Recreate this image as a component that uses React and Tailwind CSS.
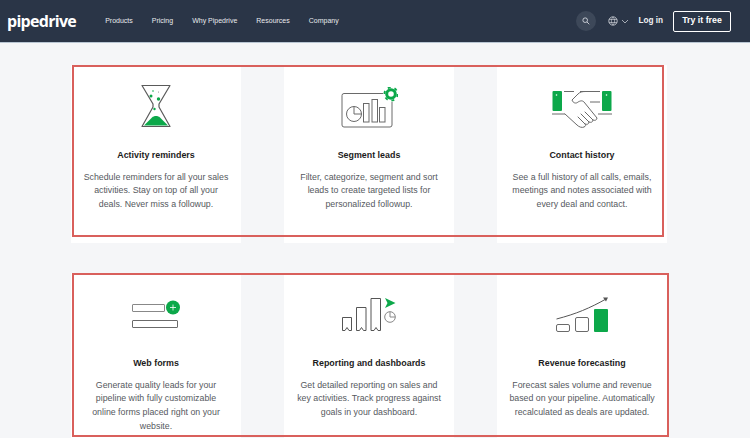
const Hourglass = () => (
  <svg width="32" height="44" viewBox="0 0 32 44" fill="none">
    <path d="M2 1.500h28L19 20v3l11 19.500H2L13 23v-3L2 1.500z" stroke="#5a5a5a" strokeWidth="1.200" strokeLinejoin="round" />
    <path d="M4 41.500l8-8c2-2 6-2 8 0l8 8z" fill="#0ca84a" />
    <circle cx="11" cy="12" r="1.500" fill="#0ca84a" />
    <circle cx="18.500" cy="15" r="1.700" fill="#0ca84a" />
    <circle cx="14.500" cy="25" r="1.200" fill="#0ca84a" />
    <circle cx="13" cy="7" r="0.800" fill="#0ca84a" />
    <circle cx="18.500" cy="8" r="0.500" fill="#777" />
  </svg>
);

const Segment = () => (
  <svg width="57" height="41" viewBox="0 0 57 41" fill="none">
    <path d="M42 6.500H3a2 2 0 0 0-2 2V38a2 2 0 0 0 2 2h46a2 2 0 0 0 2-2V15" stroke="#6a6a6a" />
    <circle cx="13" cy="27" r="7.500" stroke="#6a6a6a" />
    <path d="M13 19.500V27h7.500" stroke="#6a6a6a" />
    <rect x="22.500" y="16.500" width="5.500" height="18.500" stroke="#6a6a6a" />
    <rect x="31" y="12.500" width="5.500" height="22.500" stroke="#6a6a6a" />
    <rect x="38.500" y="20.500" width="5.500" height="14.500" stroke="#6a6a6a" />
    <circle cx="50" cy="7" r="4.300" stroke="#0ca84a" strokeWidth="3" />
    <circle cx="50" cy="7" r="6.600" stroke="#0ca84a" strokeWidth="1.800" strokeDasharray="3 3.900" />
  </svg>
);

const Handshake = () => (
  <svg width="60" height="38" viewBox="0 0 60 38" fill="none">
    <rect x="0.500" y="1" width="9.500" height="20" rx="1" fill="#0ca84a" />
    <rect x="50" y="1" width="9.500" height="20" rx="1" fill="#0ca84a" />
    <circle cx="4.500" cy="5" r="0.800" fill="#fff" />
    <circle cx="54.500" cy="5" r="0.800" fill="#fff" />
    <path d="M12 1.500h10M28 1.500h20M0 24h13M46 24h14M38 12h10" stroke="#6a6a6a" />
    <path
      d="M13 24l12 11c2 2 5 3 7 2 2-1 2-2 1-3l-7-7M33 34c2 1 4 0 4-2l-8-8M37 32c2 1 4 0 4-2l-8-8M41 30c2 1 4 0 4-2L32 12c-2-2-4-1-6 0-2 2-5 1-6-2l6-6c2-2 4-2.500 7-2.500"
      stroke="#6a6a6a"
      strokeLinejoin="round"
      strokeLinecap="round"
    />
  </svg>
);

const Forms = () => (
  <svg className="mb-[8px]" width="49" height="28" viewBox="0 0 49 28" fill="none">
    <rect x="0.500" y="4.500" width="32" height="7" rx="0.500" stroke="#888" />
    <rect x="0.500" y="20.500" width="45" height="7" rx="0.500" stroke="#6a6a6a" />
    <circle cx="41" cy="7.500" r="7" fill="#0ca84a" />
    <path d="M41 4.500v6M38 7.500h6" stroke="#fff" strokeWidth="0.800" />
  </svg>
);

const Reporting = () => (
  <svg className="mb-[5px]" width="54" height="34" viewBox="0 0 54 34" fill="none">
    <path d="M0.500 33.500V20.500h9v13M7 33.500l-2-3-2 3M0.500 33.500H3M7 33.500h2.500" stroke="#555" />
    <path d="M14.500 33.500V10.500h9.500v23M21.500 33.500l-2-3-2 3M14.500 33.500h3M21.500 33.500H24" stroke="#555" />
    <path d="M29 33.500V1.500h9.500v32M36 33.500l-2-3-2 3M29 33.500h3M36 33.500h2.500" stroke="#555" />
    <path d="M43 1l10.500 5L43 11l2.500-5z" fill="#0ca84a" />
    <circle cx="48" cy="20" r="5.300" stroke="#888" />
    <path d="M48 14.700V20h5.300" stroke="#888" />
  </svg>
);

const Revenue = () => (
  <svg className="mb-[4px]" width="52" height="35" viewBox="0 0 52 35" fill="none">
    <path d="M0.500 22C20 17 34 11 50 2" stroke="#555" />
    <path d="M47 0.500l5 0-2 4z" fill="#555" />
    <rect x="0.500" y="27.500" width="13" height="7" rx="1.500" stroke="#6a6a6a" />
    <rect x="19.500" y="20.500" width="13" height="14" rx="1.500" stroke="#6a6a6a" />
    <rect x="38" y="12" width="14" height="23" rx="1" fill="#0ca84a" />
  </svg>
);

const Card = ({ icon, title, lines }) => (
  <div className="w-[170px] bg-white flex flex-col items-center">
    <div className="h-[63px] flex items-end justify-center">{icon}</div>
    <h3 className="mt-[20px] text-[8.9px] leading-[14px] font-bold text-[#1c1c1c]">{title}</h3>
    <p className="mt-[8.5px] text-[8.8px] leading-[13.7px] text-[#55595e] text-center whitespace-nowrap">
      {lines.map((l) => (
        <span key={l} className="block">{l}</span>
      ))}
    </p>
  </div>
);

// red frames sit on top of the cards, they are annotations on the screenshot
const Row = ({ children, className, frame }) => (
  <section className={`relative pl-[71px] flex gap-[43px] ${className}`}>
    {children}
    <div className={`absolute left-[72px] top-0 border-2 border-[#d9605c] ${frame}`}></div>
  </section>
);

export default function App() {
  return (
    <div className="w-[750px] h-[438px] overflow-hidden bg-[#f5f6f8] font-['Liberation_Sans',Arial,sans-serif]">
      <header className="h-[43px] bg-[#2a3547] border-b border-[#b9c6d3] flex items-center pl-[7px] pr-[19px]">
        <span className="text-[16px] font-bold tracking-[-0.7px] text-white font-['Open_Sans',sans-serif]">pipedrive</span>
        <nav className="ml-[29px] flex gap-[19px] text-[7px] text-[#e8eaed]">
          <a>Products</a>
          <a>Pricing</a>
          <a>Why Pipedrive</a>
          <a>Resources</a>
          <a>Company</a>
        </nav>
        <div className="ml-auto flex items-center">
          <div className="w-[20px] h-[20px] rounded-full bg-[#3d4859] flex items-center justify-center">
            <svg width="8" height="8" viewBox="0 0 9 9" fill="none">
              <circle cx="3.600" cy="3.600" r="2.600" stroke="#d5d9df" />
              <path d="M5.600 5.600l2.600 2.600" stroke="#d5d9df" />
            </svg>
          </div>
          <svg className="ml-[12px]" width="10" height="10" viewBox="0 0 10 10" fill="none">
            <circle cx="5" cy="5" r="4.200" stroke="#d5d9df" strokeWidth="0.800" />
            <path d="M1 3.500h8M1 6.500h8M5 1c-2.200 2.500-2.200 5.500 0 8M5 1c2.200 2.500 2.200 5.500 0 8" stroke="#d5d9df" strokeWidth="0.600" />
          </svg>
          <svg className="ml-[3px]" width="8" height="5" viewBox="0 0 8 5" fill="none">
            <path d="M1 1l3 3 3-3" stroke="#c5cad1" strokeWidth="0.800" />
          </svg>
          <span className="ml-[9px] text-[8.2px] font-semibold text-[#f0f1f3]">Log in</span>
          <button className="ml-[10px] w-[58px] h-[21px] rounded-[2px] border border-white text-[8.8px] font-bold text-white">
            Try it free
          </button>
        </div>
      </header>
      <main className="pt-[22px]">
        <Row className="h-[178px]" frame="w-[592px] h-[172px]">
          <Card
            icon={<Hourglass />}
            title="Activity reminders"
            lines={["Schedule reminders for all your sales", "activities. Stay on top of all your", "deals. Never miss a followup."]}
          />
          <Card
            icon={<Segment />}
            title="Segment leads"
            lines={["Filter, categorize, segment and sort", "leads to create targeted lists for", "personalized followup."]}
          />
          <Card
            icon={<Handshake />}
            title="Contact history"
            lines={["See a full history of all calls, emails,", "meetings and notes associated with", "every deal and contact."]}
          />
        </Row>
        <Row className="mt-[30px] h-[170px]" frame="w-[597px] h-[164px]">
          <Card
            icon={<Forms />}
            title="Web forms"
            lines={["Generate quality leads for your", "pipeline with fully customizable", "online forms placed right on your", "website."]}
          />
          <Card
            icon={<Reporting />}
            title="Reporting and dashboards"
            lines={["Get detailed reporting on sales and", "key activities. Track progress against", "goals in your dashboard."]}
          />
          <Card
            icon={<Revenue />}
            title="Revenue forecasting"
            lines={["Forecast sales volume and revenue", "based on your pipeline. Automatically", "recalculated as deals are updated."]}
          />
        </Row>
      </main>
    </div>
  );
}
